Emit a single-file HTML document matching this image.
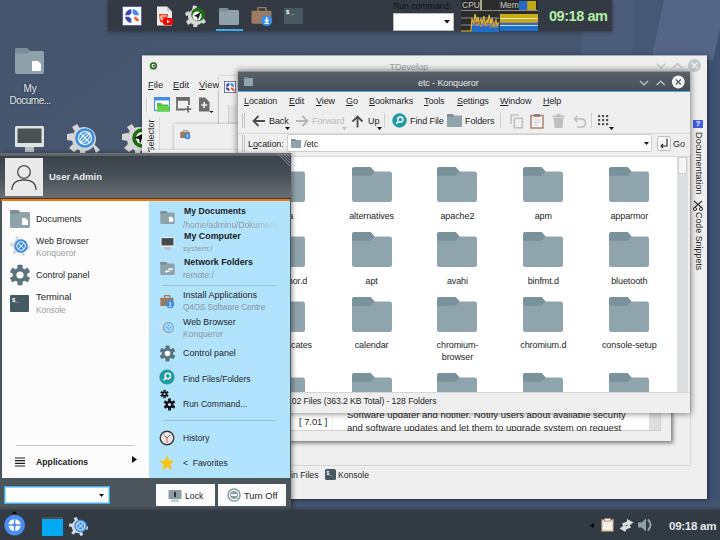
<!DOCTYPE html>
<html><head><meta charset="utf-8">
<style>
*{margin:0;padding:0;box-sizing:border-box}
html,body{width:720px;height:540px;overflow:hidden}
body{position:relative;font-family:"Liberation Sans",sans-serif;background:#44546f;color:#232627}
.a{position:absolute}
.t{position:absolute;white-space:nowrap;line-height:1}
</style></head><body>
<svg width="0" height="0" style="position:absolute">
  <defs>
    <symbol id="fold" viewBox="0 0 40 35">
      <path d="M2.5 0 L18.5 0 L22.5 4.5 L37.5 4.5 Q40 4.5 40 7 L40 32.5 Q40 35 37.5 35 L2.5 35 Q0 35 0 32.5 L0 2.5 Q0 0 2.5 0 Z" fill="#8fa4ad"/>
      <path d="M2.5 0 L18.5 0 L22.5 4.5 L18.5 8.7 L0 8.7 L0 2.5 Q0 0 2.5 0 Z" fill="#7a929c"/>
    </symbol>
  </defs>
</svg>

<!-- desktop background -->
<svg class="a" style="left:0;top:0" width="720" height="540" viewBox="0 0 720 540">
  <defs>
    <linearGradient id="bgG" x1="0" y1="0" x2="1" y2="1">
      <stop offset="0" stop-color="#45556e"/>
      <stop offset="0.35" stop-color="#47576f"/>
      <stop offset="1" stop-color="#435370"/>
    </linearGradient>
  </defs>
  <rect width="720" height="540" fill="url(#bgG)"/>
  <polygon points="585,0 636,0 632,60 580,60" fill="#4b5c7a"/>
  <polygon points="636,0 664,0 651,60 632,60" fill="#475877"/>
  <polygon points="664,0 720,0 720,30 713,60 651,60" fill="#546587"/>
  <polygon points="720,30 720,540 700,540 700,90 713,60" fill="#3f5071"/>
  <rect x="0" y="500" width="720" height="10" fill="#44546f"/>
</svg>
<!-- desktop icons -->
<div id="desk">
  <svg class="a" style="left:15px;top:48px" width="29" height="26" viewBox="0 0 29 26">
    <path d="M2 0 L12 0 L15 3 L27 3 Q29 3 29 5 L29 24 Q29 26 27 26 L2 26 Q0 26 0 24 L0 2 Q0 0 2 0 Z" fill="#8fa2aa"/>
    <path d="M2 0 L12 0 L15 3 L13 5.5 L0 5.5 L0 2 Q0 0 2 0 Z" fill="#7b8f99"/>
    <path d="M17 13 L23 13 L26 16 L26 23 L17 23 Z" fill="#fff"/>
  </svg>
  <div class="t" style="left:23.5px;top:83.5px;font-size:10px;color:#e2e7ec;text-shadow:0 0 2px rgba(0,0,0,0.5)">My</div>
  <div class="t" style="left:9.5px;top:95.5px;font-size:10px;letter-spacing:-0.5px;color:#e2e7ec;text-shadow:0 0 2px rgba(0,0,0,0.5)">Docume...</div>
  <svg class="a" style="left:15px;top:126px" width="29" height="26" viewBox="0 0 29 26">
    <rect x="0" y="0" width="29" height="21" rx="1.5" fill="#dfe3e5"/>
    <rect x="2.5" y="2.5" width="24" height="14.5" fill="#4b5153"/>
    <rect x="10" y="21" width="9" height="5" fill="#b9c0c3"/>
  </svg>
  <svg class="a" style="left:67px;top:124px" width="33" height="30" viewBox="0 0 33 30">
    <g fill="#d5d5d5">
      <path d="M5 3 L10 0 L14 6 L9 9 Z"/>
      <path d="M0 10 L6 9 L6 17 L0 16 Z"/>
      <path d="M2 24 L6 20 L11 25 L7 28 Z"/>
      <path d="M13 24 L19 24 L18 30 L13 30 Z"/>
      <path d="M26 22 L28 21 L33 26 L29 29 Z"/>
      <circle cx="17" cy="15" r="12"/>
    </g>
    <circle cx="18" cy="14" r="9.8" fill="#3b8fe6"/>
    <g stroke="#fff" stroke-width="1.2" fill="none">
      <circle cx="18" cy="14" r="6.5"/>
      <ellipse cx="18" cy="14" rx="3" ry="6.5" transform="rotate(45 18 14)"/>
      <path d="M13.4 9.4 L22.6 18.6 M13.4 18.6 L22.6 9.4"/>
    </g>
  </svg>
  <svg class="a" style="left:122px;top:124px" width="22" height="30" viewBox="0 0 22 30">
    <g fill="#d5d5d5">
      <path d="M5 3 L10 0 L14 6 L9 9 Z"/>
      <path d="M0 10 L6 9 L6 17 L0 16 Z"/>
      <path d="M2 24 L6 20 L11 25 L7 28 Z"/>
      <path d="M13 24 L19 24 L18 30 L13 30 Z"/>
      <circle cx="17" cy="15" r="12"/>
    </g>
    <circle cx="20" cy="14" r="9.8" fill="#1f6e13"/>
    <circle cx="20" cy="14" r="6" fill="#fff"/>
    <path d="M22 9 L12 14 L17 15 L18 20 Z" fill="#111"/>
  </svg>
</div>
</div>

<!-- top panel -->
<div class="a" style="left:108px;top:0;width:504px;height:31px;background:#333a44;box-shadow:0 1px 4px rgba(0,0,0,0.4)">
  <!-- q4os icon -->
  <svg class="a" style="left:14px;top:6px" width="20" height="20" viewBox="0 0 20 20">
    <rect x="0.5" y="0.5" width="19" height="19" fill="#fdfdfd" stroke="#5a5fa8" stroke-width="1"/>
    <path d="M10 10 L3 10 A7 7 0 0 1 10 3 Z" fill="#3a46ab"/>
    <path d="M10 10 L10 3 A7 7 0 0 1 17 10 Z" fill="#3d8bf3"/>
    <path d="M10 10 L10 17 A7 7 0 0 1 3 10 Z" fill="#3a46ab"/>
    <path d="M3 10 L17 10 M10 3 L10 17" stroke="#fdfdfd" stroke-width="1.3"/>
    <circle cx="10" cy="10" r="2.6" fill="#fdfdfd"/>
    <path d="M11.8 12.2 L13.6 10.4 L17.2 14 L15.4 15.8 Z" fill="#f4511e"/>
  </svg>
  <!-- html doc icon -->
  <svg class="a" style="left:48px;top:6px" width="20" height="21" viewBox="0 0 20 21">
    <path d="M1 0.5 L11 0.5 L16 5.5 L16 19.5 L1 19.5 Z" fill="#ececec"/>
    <path d="M11 0.5 L11 5.5 L16 5.5 Z" fill="#d0d0d0"/>
    <path d="M3 8 L12 8 L11 16 L7.5 17 L4 16 Z" fill="#e44d26"/>
    <path d="M5 10 L10 10 M5 10 L5 13 L9 13 L9 15" stroke="#fff" stroke-width="1" fill="none"/>
    <rect x="7" y="12" width="10" height="7" rx="2" fill="#f00"/>
    <path d="M11 13.8 L14 15.5 L11 17.2 Z" fill="#fff"/>
  </svg>
  <!-- gear green -->
  <svg class="a" style="left:77px;top:5px" width="23" height="23" viewBox="0 0 23 23">
    <g fill="#d9d9d9">
      <circle cx="11" cy="12" r="8"/>
      <path d="M8 0.5 L12 1 L11 5 L7 5 Z"/>
      <path d="M0 8 L4 6 L5 10 L1 11 Z"/>
      <path d="M1 16 L5 14 L6 18 L3 20 Z"/>
      <path d="M8 22 L9 18 L13 18 L12 22 Z"/>
      <path d="M18 19 L16 16 L19 14 L21 17 Z"/>
    </g>
    <circle cx="13" cy="9.5" r="6.8" fill="#1e6e12"/>
    <circle cx="12" cy="11" r="4.5" fill="#fff"/>
    <path d="M16 7 L8.8 11 L12 11.8 L12.8 15 Z" fill="#111"/>
  </svg>
  <!-- folder -->
  <svg class="a" style="left:111px;top:8px" width="20" height="17" viewBox="0 0 20 17">
    <path d="M1.5 0 L8 0 L10 2 L18.5 2 Q20 2 20 3.5 L20 15.5 Q20 17 18.5 17 L1.5 17 Q0 17 0 15.5 L0 1.5 Q0 0 1.5 0 Z" fill="#8fa1aa"/>
    <path d="M1.5 0 L8 0 L10 2 L8.5 3.5 L0 3.5 L0 1.5 Q0 0 1.5 0 Z" fill="#7a8e98"/>
  </svg>
  <div class="a" style="left:108px;top:29px;width:27px;height:2px;background:#3daee9"></div>
  <!-- briefcase -->
  <svg class="a" style="left:143px;top:7px" width="23" height="21" viewBox="0 0 23 21">
    <path d="M7 4 L7 1.5 Q7 0.5 8 0.5 L14 0.5 Q15 0.5 15 1.5 L15 4" stroke="#9c7b61" stroke-width="1.5" fill="none"/>
    <rect x="0.5" y="3.8" width="20" height="13" rx="1" fill="#9c7b61"/>
    <circle cx="15.7" cy="13.5" r="5.5" fill="#3b8ee8"/>
    <path d="M15.7 10 L15.7 14.5 M13.8 12.8 L15.7 14.8 L17.6 12.8 M13.5 16.3 L18 16.3" stroke="#fff" stroke-width="1.3" fill="none"/>
  </svg>
  <!-- terminal -->
  <div class="a" style="left:176px;top:8px;width:19px;height:16px;background:#485961;border-radius:1px"></div>
  <div class="t" style="left:178px;top:9px;font-size:6px;font-weight:bold;color:#fff">$ _</div>
  <!-- run command -->
  <div class="t" style="left:285px;top:1.8px;font-size:8.6px;color:#0e1114">Run command:</div>
  <div class="a" style="left:285px;top:13px;width:61px;height:18px;background:#fff;border:1px solid #bbb"></div>
  <svg class="a" style="left:336px;top:20px" width="6" height="4" viewBox="0 0 6 4"><path d="M0 0 L6 0 L3 3.5 Z" fill="#111"/></svg>
  <!-- cpu/mem -->
  <div class="a" style="left:353px;top:0;width:38px;height:31px;background:#2b2b2b"></div>
  <div class="a" style="left:392px;top:0;width:38px;height:31px;background:#2b2b2b"></div>
  <div class="t" style="left:354px;top:1px;font-size:8.5px;color:#c8c8c8">CPU</div>
  <div class="t" style="left:392px;top:1px;font-size:8.5px;color:#c8c8c8">Mem</div>
  <div class="a" style="left:372px;top:0;width:1px;height:10px;background:#6ab0f0"></div>
  <div class="a" style="left:373px;top:0;width:1px;height:10px;background:#e0a020"></div>
  <div class="a" style="left:411px;top:1px;width:8px;height:9px;background:#1e6bc8"></div>
  <div class="a" style="left:419px;top:1px;width:1px;height:9px;background:#d08020"></div>
  <div class="a" style="left:420px;top:1px;width:8px;height:9px;background:#c0a818"></div>
  <div class="a" style="left:353px;top:10px;width:77px;height:1px;background:#8a8a8a"></div>
  <svg class="a" style="left:353px;top:11px" width="39" height="21" viewBox="0 0 39 21">
    <path d="M11 21 L11 8 L13 12 L14 3 L16 11 L17 6 L18 12 L20 8 L21 13 L23 5 L24 14 L26 9 L27 12 L28 4 L30 13 L31 7 L33 15 L35 9 L36 14 L38 11 L38 21 Z" fill="#1f6fc8"/>
    <path d="M0 20 L10 20 L11 8 L13 12 L14 3 L16 11 L17 6 L18 12 L20 8 L21 13 L23 5 L24 14 L26 9 L27 12 L28 4 L30 13 L31 7 L33 15 L35 9 L36 14 L38 11" stroke="#e8b820" stroke-width="1.2" fill="none"/>
    <path d="M12 14 L14 9 L16 15 L18 10 L20 16 L23 11 L25 16 L28 10 L30 17 L33 12 L35 17 L38 14" stroke="#e07818" stroke-width="1" fill="none"/>
    <path d="M0 7 L38 7 M0 14 L38 14" stroke="#a8a8a8" stroke-width="0.8"/>
  </svg>
  <div class="a" style="left:392px;top:14px;width:38px;height:8px;background:#c8ac18"></div>
  <div class="a" style="left:392px;top:22px;width:38px;height:1px;background:#d08020"></div>
  <div class="a" style="left:392px;top:23px;width:38px;height:8px;background:#1f6fc8"></div>
  <div class="a" style="left:392px;top:18px;width:38px;height:1px;background:#e8e8c8"></div>
  <div class="a" style="left:392px;top:25px;width:38px;height:1px;background:#c8d8f0"></div>
  <!-- clock -->
  <div class="t" style="left:441px;top:8.5px;font-size:14.5px;letter-spacing:-0.45px;font-weight:bold;color:#b6eea6">09:18 am</div>
</div>

<!-- TDevelop window -->
<div class="a" style="left:142px;top:55px;width:565px;height:444px;background:#efefef;box-shadow:1px 1px 4px rgba(0,0,0,0.5)">
  <div class="a" style="left:0;top:0;width:565px;height:1px;background:#a8b0bc"></div>
  <svg class="a" style="left:6px;top:6px" width="11" height="10" viewBox="0 0 11 10">
    <circle cx="5" cy="5" r="4.5" fill="#ddd"/>
    <circle cx="5.5" cy="4.8" r="3.6" fill="#1f6e13"/>
    <circle cx="5.5" cy="4.8" r="2" fill="#fff"/>
    <path d="M7 3.5 L4 5 L5.5 5.3 L6 6.8 Z" fill="#111"/>
  </svg>
  <div class="t" style="left:247.5px;top:8px;font-size:9px;color:#a0a4a8">TDevelop</div>
  <svg class="a" style="left:513px;top:4px" width="46" height="14" viewBox="0 0 46 14">
    <path d="M1.5 4.5 L6 9 L10.5 4.5" stroke="#c3c8cb" stroke-width="1.3" fill="none"/>
    <path d="M18 9 L22.5 4.5 L27 9" stroke="#c3c8cb" stroke-width="1.3" fill="none"/>
  </svg>
  <svg class="a" style="left:545px;top:3px" width="15" height="15" viewBox="0 0 15 15">
    <circle cx="7.5" cy="7.5" r="6.5" fill="#c3c8cb"/>
    <path d="M4.5 4.5 L10.5 10.5 M10.5 4.5 L4.5 10.5" stroke="#efefef" stroke-width="1.3"/>
  </svg>
  <div class="t" style="left:6px;top:25px;font-size:9.4px;color:#232627"><u>F</u>ile</div>
  <div class="t" style="left:31px;top:25px;font-size:9.4px;color:#232627"><u>E</u>dit</div>
  <div class="t" style="left:57px;top:25px;font-size:9.4px;color:#232627"><u>V</u>iew</div>
  <div class="a" style="left:4px;top:42px;width:2px;height:15px;border-left:1px solid #c8c8c8;border-right:1px solid #fff"></div>
  <svg class="a" style="left:12px;top:42px" width="17" height="16" viewBox="0 0 17 16">
    <rect x="0.5" y="0.5" width="15" height="13" fill="#fff" stroke="#3d8ee9"/>
    <rect x="0.5" y="0.5" width="15" height="3" fill="#3d8ee9"/>
    <path d="M3 6 L7 6 L8 7.5 L14 7.5 L16 14.5 L3 14.5 Z" fill="#4dbd3a"/>
    <path d="M3 9 L16 9 L15 14.5 L3 14.5 Z" fill="#63d050"/>
  </svg>
  <svg class="a" style="left:34px;top:42px" width="16" height="16" viewBox="0 0 16 16">
    <path d="M9 12.5 L1 12.5 L1 1 L13 1 L13 8" stroke="#6c6c6c" stroke-width="1.8" fill="none"/>
    <rect x="1" y="1" width="12" height="2.8" fill="#6c6c6c"/>
    <path d="M12 9 L12 15.5 M8.8 12.2 L15.2 12.2" stroke="#6c6c6c" stroke-width="1.8"/>
  </svg>
  <svg class="a" style="left:56px;top:42px" width="17" height="16" viewBox="0 0 17 16">
    <path d="M1 0.5 L7 0.5 L11.5 5 L11.5 14.5 L1 14.5 Z" fill="#6c6c6c"/>
    <path d="M6.2 5 L6.2 11 M3.2 8 L9.2 8" stroke="#eee" stroke-width="1.6"/>
    <path d="M11.5 14 L15.5 14 L13.5 16 Z" fill="#111"/>
  </svg>
  <div class="a" style="left:76px;top:36px;width:1px;height:32px;background:#d5d5d5"></div>
  <!-- left selector strip -->
  <div class="t" style="left:-9.5px;top:76px;width:38px;height:10px;font-size:9px;color:#232627;transform:rotate(-90deg);text-align:center">Selector</div>
  <div class="a" style="left:17px;top:62px;width:1px;height:380px;background:#d8d8d8"></div>
  <!-- inner windows -->
  <div class="a" style="left:77px;top:21px;width:30px;height:350px;background:#efefef;box-shadow:0 0 2px rgba(0,0,0,0.25)">
    <svg class="a" style="left:5px;top:5px" width="12" height="12" viewBox="0 0 20 20">
      <rect x="0.5" y="0.5" width="19" height="19" fill="#fdfdfd" stroke="#4a4f9a" stroke-width="1.5"/>
      <path d="M9 3 A7 7 0 0 0 3 9 L7 9 A3 3 0 0 1 9 7 Z" fill="#3b48ad"/>
      <path d="M11 3 A7 7 0 0 1 17 9 L13 9 A3 3 0 0 0 11 7 Z" fill="#3f8ef5"/>
      <path d="M3 11 A7 7 0 0 0 9 17 L9 13 A3 3 0 0 1 7 11 Z" fill="#3b48ad"/>
      <path d="M11.5 12.5 L13 11 L17.5 15 L16 16.5 Z" fill="#f4511e" stroke="#f4511e" stroke-width="1.5"/>
    </svg>
    <div class="a" style="left:9px;top:29px;width:9px;height:300px;background:#e2e3e4;border-left:1px solid #d0d0d0"></div>
  </div>
  <div class="a" style="left:32px;top:69px;width:70px;height:350px;background:#efefef;box-shadow:0 0 3px rgba(0,0,0,0.3)">
    <svg class="a" style="left:6px;top:6px" width="11" height="10" viewBox="0 0 23 21">
      <path d="M7 4 L7 1.5 Q7 0.5 8 0.5 L14 0.5 Q15 0.5 15 1.5 L15 4" stroke="#9c7b61" stroke-width="2" fill="none"/>
      <rect x="0.5" y="3.8" width="20" height="13" rx="1" fill="#9c7b61"/>
      <circle cx="15.7" cy="13.5" r="6" fill="#3b8ee8"/>
      <path d="M15.7 10 L15.7 15" stroke="#fff" stroke-width="2"/>
    </svg>
  </div>
  <!-- bottom bar -->
  <div class="a" style="left:-20px;top:100px;width:569px;height:311px;border-right:1px solid #d6d6d6;border-bottom:1px solid #d6d6d6;border-radius:0 0 2px 0"></div>
  <div class="t" style="left:149px;top:416px;font-size:8.7px;color:#232627">in Files</div>
  <div class="a" style="left:183px;top:414px;width:11px;height:11px;background:#475961;border-radius:1.5px"></div>
  <div class="t" style="left:184.5px;top:416px;font-size:5px;font-weight:bold;color:#fff">$_</div>
  <div class="t" style="left:196px;top:416px;font-size:8.6px;color:#232627">Konsole</div>
  <!-- right strip -->
  <div class="a" style="left:551px;top:65px;width:10px;height:8px;background:#3d5fe0"></div>
  <div class="t" style="left:553.5px;top:65px;font-size:8px;font-weight:bold;color:#fff">?</div>
  <div class="t" style="top:77px;font-size:9.3px;color:#232627;transform:rotate(90deg);transform-origin:0 0;left:561px">Documentation</div>
  <svg class="a" style="left:551px;top:145px" width="11" height="11" viewBox="0 0 11 11">
    <path d="M1 1 L9 8 M9 1 L1 8" stroke="#333" stroke-width="1.2"/>
    <circle cx="2" cy="9" r="1.6" fill="none" stroke="#333"/>
    <circle cx="8" cy="9" r="1.6" fill="none" stroke="#333"/>
  </svg>
  <div class="t" style="font-size:8.9px;color:#232627;transform:rotate(90deg);transform-origin:0 0;left:561px;top:156.5px">Code Snippets</div>
</div>

<!-- updater window -->
<div class="a" style="left:150px;top:150px;width:521px;height:291px;background:#efefef;box-shadow:2px 2px 4px rgba(0,0,0,0.5)">
  <div class="a" style="left:0;top:0;width:511px;height:281px;background:#fff;border-right:1px solid #d0d0d0;border-bottom:1px solid #d0d0d0"></div>
  <div class="a" style="left:499px;top:0;width:11px;height:280px;background:#dcdedf"></div>
  <div class="a" style="left:182px;top:0;width:1px;height:280px;background:#f0f0f0"></div>
  <div class="t" style="left:149px;top:268px;font-size:9.3px;color:#232627">[ 7.01 ]</div>
  <div class="t" style="left:197px;top:260px;font-size:9.5px;color:#232627">Software updater and notifier. Notify users about available security</div>
  <div class="t" style="left:197px;top:272.5px;font-size:9.5px;color:#232627">and software updates and let them to upgrade system on request</div>
  <div class="a" style="left:0;top:281px;width:511px;height:10px;background:#efefef"></div>
</div>

<!-- Konqueror window -->
<div class="a" style="left:238px;top:71px;width:452px;height:342px;background:#efefef;box-shadow:0 0 6px 1px rgba(0,0,0,0.45);font-size:9px;letter-spacing:-0.1px">
  <div class="a" style="left:0;top:0;width:452px;height:1px;background:#8c9398"></div><div class="a" style="left:0;top:1px;width:452px;height:19px;background:linear-gradient(#58616a,#464e56)"></div>
  <div class="a" style="left:0;top:20px;width:452px;height:1px;background:#3daee9"></div>
  <svg class="a" style="left:5px;top:5px" width="11" height="11" viewBox="0 0 11 11">
    <path d="M1 1 L4.5 1 L5.5 2 L10 2 L10 10 L1 10 Z" fill="#8ea5b0"/>
    <path d="M1 1 L4.5 1 L5.5 2 L4.5 3 L1 3 Z" fill="#6f8894"/>
  </svg>
  <div class="t" style="left:180px;top:8px;font-size:9px;color:#e6e9ec">etc - Konqueror</div>
  <svg class="a" style="left:398px;top:4px" width="34" height="13" viewBox="0 0 34 13">
    <path d="M4 6 L8 10 L12 6" stroke="#c9cdd0" stroke-width="1.2" fill="none"/>
    <path d="M20.7 10 L24.7 6 L28.7 10" stroke="#c9cdd0" stroke-width="1.2" fill="none"/>
  </svg>
  <svg class="a" style="left:432.5px;top:3.5px" width="15" height="15" viewBox="0 0 15 15">
    <circle cx="7.3" cy="7" r="6.4" fill="#f3f4f5"/>
    <path d="M4.8 4.5 L9.8 9.5 M9.8 4.5 L4.8 9.5" stroke="#4a5158" stroke-width="1.1"/>
  </svg>
  <!-- menu -->
  <div class="t" style="left:6px;top:26px;color:#232627"><u>L</u>ocation</div>
  <div class="t" style="left:51px;top:26px;color:#232627"><u>E</u>dit</div>
  <div class="t" style="left:78px;top:26px;color:#232627"><u>V</u>iew</div>
  <div class="t" style="left:108px;top:26px;color:#232627"><u>G</u>o</div>
  <div class="t" style="left:131px;top:26px;color:#232627"><u>B</u>ookmarks</div>
  <div class="t" style="left:186px;top:26px;color:#232627"><u>T</u>ools</div>
  <div class="t" style="left:219px;top:26px;color:#232627"><u>S</u>ettings</div>
  <div class="t" style="left:262px;top:26px;color:#232627"><u>W</u>indow</div>
  <div class="t" style="left:305px;top:26px;color:#232627"><u>H</u>elp</div>
  <!-- toolbar -->
  <div class="a" style="left:4px;top:42px;width:3px;height:15px;border-left:1px solid #c4c4c4;border-right:1px solid #c4c4c4"></div>
  <svg class="a" style="left:14px;top:44px" width="14" height="12" viewBox="0 0 14 12">
    <path d="M13 6 L1.5 6 M6.5 1 L1.5 6 L6.5 11" stroke="#4d4d4d" stroke-width="1.8" fill="none"/>
  </svg>
  <div class="t" style="left:31px;top:46px;color:#232627">Back</div>
  <svg class="a" style="left:47px;top:56px" width="6" height="4"><path d="M0 0 L5 0 L2.5 3 Z" fill="#111"/></svg>
  <svg class="a" style="left:57px;top:44px" width="14" height="12" viewBox="0 0 14 12">
    <path d="M1 6 L12.5 6 M7.5 1 L12.5 6 L7.5 11" stroke="#b4b4b4" stroke-width="1.8" fill="none"/>
  </svg>
  <div class="t" style="left:74px;top:46px;color:#bcbcbc">Forward</div>
  <svg class="a" style="left:104px;top:56px" width="6" height="4"><path d="M0 0 L5 0 L2.5 3 Z" fill="#bbb"/></svg>
  <svg class="a" style="left:113px;top:44px" width="13" height="13" viewBox="0 0 13 13">
    <path d="M6.5 12.5 L6.5 1.5 M1.5 6.5 L6.5 1.5 L11.5 6.5" stroke="#4d4d4d" stroke-width="1.8" fill="none"/>
  </svg>
  <div class="t" style="left:130px;top:46px;color:#232627">Up</div>
  <svg class="a" style="left:139px;top:56px" width="6" height="4"><path d="M0 0 L5 0 L2.5 3 Z" fill="#111"/></svg>
  <div class="a" style="left:146px;top:42px;width:1px;height:15px;background:#cfcfcf"></div>
  <svg class="a" style="left:154px;top:42px" width="15" height="15" viewBox="0 0 15 15">
    <circle cx="7.5" cy="7.5" r="7.2" fill="#1e9aa5"/>
    <circle cx="8.3" cy="6.6" r="2.6" fill="none" stroke="#fff" stroke-width="1.4"/>
    <path d="M6.4 8.5 L4.2 10.7" stroke="#fff" stroke-width="1.6"/>
  </svg>
  <div class="t" style="left:172px;top:46px;color:#232627">Find File</div>
  <svg class="a" style="left:209px;top:43px" width="15" height="14" viewBox="0 0 15 14">
    <path d="M0 0 L5.5 0 L7 1.5 L15 1.5 L15 13 L0 13 Z" fill="#8fa3ac"/>
    <path d="M0 0 L5.5 0 L7 1.5 L6 2.8 L0 2.8 Z" fill="#7a8f99"/>
  </svg>
  <div class="t" style="left:227px;top:46px;color:#232627">Folders</div>
  <div class="a" style="left:262px;top:42px;width:1px;height:15px;background:#cfcfcf"></div>
  <svg class="a" style="left:272px;top:43px" width="14" height="15" viewBox="0 0 14 15">
    <path d="M9 1 L1 1 L1 10" stroke="#c2c2c2" stroke-width="1.6" fill="none"/>
    <rect x="4.3" y="4.3" width="8" height="9.5" fill="none" stroke="#c2c2c2" stroke-width="1.6"/>
  </svg>
  <svg class="a" style="left:292px;top:42px" width="14" height="16" viewBox="0 0 14 16">
    <rect x="1" y="2.5" width="12" height="12.5" fill="#f6f6f6" stroke="#a57d6a" stroke-width="1.4"/>
    <rect x="4" y="1" width="6" height="3" fill="#a57d6a"/>
    <path d="M3.5 7 L10.5 7 M3.5 9.5 L10.5 9.5 M3.5 12 L8 12" stroke="#ccc" stroke-width="1"/>
  </svg>
  <svg class="a" style="left:314px;top:43px" width="13" height="15" viewBox="0 0 13 15">
    <rect x="0.5" y="1.5" width="12" height="2" fill="#c0c0c0"/>
    <rect x="4.5" y="0" width="4" height="2" fill="#c0c0c0"/>
    <path d="M1.5 4 L11.5 4 L10.5 14 L2.5 14 Z" fill="#c0c0c0"/>
  </svg>
  <svg class="a" style="left:335px;top:44px" width="14" height="13" viewBox="0 0 14 13">
    <path d="M4.5 1 L1.5 4 L4.5 7 M1.5 4 L8.5 4 Q12.5 4 12.5 8 Q12.5 12 8.5 12 L4 12" stroke="#bdbdbd" stroke-width="1.6" fill="none"/>
  </svg>
  <div class="a" style="left:353px;top:42px;width:1px;height:15px;background:#cfcfcf"></div>
  <svg class="a" style="left:360px;top:44px" width="17" height="16" viewBox="0 0 17 16">
    <g fill="#555"><rect x="0" y="0" width="2.2" height="2.2"/><rect x="4" y="0" width="2.2" height="2.2"/><rect x="8" y="0" width="2.2" height="2.2"/>
    <rect x="0" y="4" width="2.2" height="2.2"/><rect x="4" y="4" width="2.2" height="2.2"/><rect x="8" y="4" width="2.2" height="2.2"/>
    <rect x="0" y="8" width="2.2" height="2.2"/><rect x="4" y="8" width="2.2" height="2.2"/><rect x="8" y="8" width="2.2" height="2.2"/></g>
    <path d="M11 12 L16 12 L13.5 15 Z" fill="#111"/>
  </svg>
  <div class="a" style="left:0;top:62px;width:452px;height:1px;background:#dadada"></div>
  <!-- location row -->
  <div class="a" style="left:4px;top:64px;width:3px;height:17px;border-left:1px solid #c4c4c4;border-right:1px solid #c4c4c4"></div>
  <div class="t" style="left:10px;top:69px;color:#232627">L<u>o</u>cation:</div>
  <div class="a" style="left:49px;top:63px;width:365px;height:18px;background:#fff;border:1px solid #cfcfcf;border-radius:2px"></div>
  <svg class="a" style="left:53px;top:68px" width="10" height="9" viewBox="0 0 10 9">
    <path d="M0 0 L4 0 L5 1 L10 1 L10 9 L0 9 Z" fill="#8fa3ac"/>
    <path d="M0 0 L4 0 L5 1 L4.2 2 L0 2 Z" fill="#7a8f99"/>
  </svg>
  <div class="t" style="left:66px;top:69px;color:#232627">/etc</div>
  <svg class="a" style="left:406px;top:71px" width="6" height="4"><path d="M0 0 L5 0 L2.5 3 Z" fill="#111"/></svg>
  <svg class="a" style="left:419px;top:65px" width="14" height="15" viewBox="0 0 14 15">
    <rect x="0.5" y="0.5" width="13" height="14" rx="2" fill="#f6f6f6" stroke="#bdbdbd"/>
    <path d="M10 2.5 L10 10 L4 10 M6 8 L4 10 L6 12" stroke="#222" stroke-width="1.1" fill="none"/>
  </svg>
  <div class="t" style="left:435px;top:69px;color:#232627">Go</div>
  <!-- file view -->
  <div class="a" style="left:0;top:85px;width:452px;height:1px;background:#d6d6d6"></div>
  <div class="a" style="left:0;top:86px;width:450px;height:235px;background:#fff"></div>
  <div class="a" style="left:439px;top:86px;width:11px;height:235px;background:#dcdedf"></div>
  <div class="a" style="left:440px;top:86px;width:9px;height:17px;background:#f5f5f5;border:1px solid #cfcfcf"></div>
  <div class="a" style="left:0;top:86px;width:439px;height:235px;overflow:hidden"><div class="a" style="left:0;top:-86px;width:439px;height:400px"><svg class="a" style="left:27px;top:96.2px" width="40" height="35"><use href="#fold"/></svg>
<div class="t" style="left:-13px;top:139px;width:120px;text-align:center;color:#232627;line-height:12px">alsa</div>
<svg class="a" style="left:113.6px;top:96.2px" width="40" height="35"><use href="#fold"/></svg>
<div class="t" style="left:73.6px;top:139px;width:120px;text-align:center;color:#232627;line-height:12px">alternatives</div>
<svg class="a" style="left:199.4px;top:96.2px" width="40" height="35"><use href="#fold"/></svg>
<div class="t" style="left:159.4px;top:139px;width:120px;text-align:center;color:#232627;line-height:12px">apache2</div>
<svg class="a" style="left:285.3px;top:96.2px" width="40" height="35"><use href="#fold"/></svg>
<div class="t" style="left:245.3px;top:139px;width:120px;text-align:center;color:#232627;line-height:12px">apm</div>
<svg class="a" style="left:371.3px;top:96.2px" width="40" height="35"><use href="#fold"/></svg>
<div class="t" style="left:331.3px;top:139px;width:120px;text-align:center;color:#232627;line-height:12px">apparmor</div>
<svg class="a" style="left:27px;top:161.3px" width="40" height="35"><use href="#fold"/></svg>
<div class="t" style="left:-13px;top:203.5px;width:120px;text-align:center;color:#232627;line-height:12px">apparmor.d</div>
<svg class="a" style="left:113.6px;top:161.3px" width="40" height="35"><use href="#fold"/></svg>
<div class="t" style="left:73.6px;top:203.5px;width:120px;text-align:center;color:#232627;line-height:12px">apt</div>
<svg class="a" style="left:199.4px;top:161.3px" width="40" height="35"><use href="#fold"/></svg>
<div class="t" style="left:159.4px;top:203.5px;width:120px;text-align:center;color:#232627;line-height:12px">avahi</div>
<svg class="a" style="left:285.3px;top:161.3px" width="40" height="35"><use href="#fold"/></svg>
<div class="t" style="left:245.3px;top:203.5px;width:120px;text-align:center;color:#232627;line-height:12px">binfmt.d</div>
<svg class="a" style="left:371.3px;top:161.3px" width="40" height="35"><use href="#fold"/></svg>
<div class="t" style="left:331.3px;top:203.5px;width:120px;text-align:center;color:#232627;line-height:12px">bluetooth</div>
<svg class="a" style="left:27px;top:225.7px" width="40" height="35"><use href="#fold"/></svg>
<div class="t" style="left:-13px;top:268px;width:120px;text-align:center;color:#232627;line-height:12px">ca-certificates</div>
<svg class="a" style="left:113.6px;top:225.7px" width="40" height="35"><use href="#fold"/></svg>
<div class="t" style="left:73.6px;top:268px;width:120px;text-align:center;color:#232627;line-height:12px">calendar</div>
<svg class="a" style="left:199.4px;top:225.7px" width="40" height="35"><use href="#fold"/></svg>
<div class="t" style="left:159.4px;top:268px;width:120px;text-align:center;color:#232627;line-height:12px">chromium-<br>browser</div>
<svg class="a" style="left:285.3px;top:225.7px" width="40" height="35"><use href="#fold"/></svg>
<div class="t" style="left:245.3px;top:268px;width:120px;text-align:center;color:#232627;line-height:12px">chromium.d</div>
<svg class="a" style="left:371.3px;top:225.7px" width="40" height="35"><use href="#fold"/></svg>
<div class="t" style="left:331.3px;top:268px;width:120px;text-align:center;color:#232627;line-height:12px">console-setup</div>
<svg class="a" style="left:27px;top:302.3px" width="40" height="35"><use href="#fold"/></svg>
<svg class="a" style="left:113.6px;top:302.3px" width="40" height="35"><use href="#fold"/></svg>
<svg class="a" style="left:199.4px;top:302.3px" width="40" height="35"><use href="#fold"/></svg>
<svg class="a" style="left:285.3px;top:302.3px" width="40" height="35"><use href="#fold"/></svg>
<svg class="a" style="left:371.3px;top:302.3px" width="40" height="35"><use href="#fold"/></svg></div></div>
  <!-- status bar -->
  <div class="a" style="left:0;top:321px;width:452px;height:1px;background:#d6d6d6"></div>
  <div class="t" style="left:49px;top:326px;font-size:8.7px;color:#232627">102 Files (363.2 KB Total) - 128 Folders</div>
</div>

<!-- start menu -->
<div class="a" style="left:0;top:153px;width:291px;height:357px;background:#4a555c;box-shadow:2px 0 4px rgba(0,0,0,0.35);font-size:9px">
  <div class="a" style="left:0;top:0;width:291px;height:3px;background:linear-gradient(#6c7175,#5a5f64)"></div>
  <div class="a" style="left:0;top:3px;width:291px;height:43px;background:linear-gradient(#3a424a 0%,#4a5258 50%,#6b7075 100%)"></div>
  <svg class="a" style="left:276px;top:1px" width="14" height="14" viewBox="0 0 14 14">
    <path d="M2 0 L14 12 M5 0 L14 9 M8 0 L14 6 M11 0 L14 3" stroke="#8a9095" stroke-width="1"/>
  </svg>
  <div class="a" style="left:5px;top:5px;width:38px;height:38px;background:#e9e9e9"></div>
  <svg class="a" style="left:9px;top:11px" width="30" height="28" viewBox="0 0 30 28">
    <circle cx="15" cy="8" r="6.3" fill="none" stroke="#4d4d4d" stroke-width="1.3"/>
    <path d="M3 26 Q3 16 15 16 Q27 16 27 26" fill="none" stroke="#4d4d4d" stroke-width="1.3"/>
  </svg>
  <div class="t" style="left:49px;top:18.5px;font-size:9.5px;font-weight:bold;color:#e9ecee">User Admin</div>
  <div class="a" style="left:0;top:45px;width:291px;height:1px;background:#3a3e42"></div>
  <div class="a" style="left:1px;top:46px;width:289px;height:2px;background:#f67400"></div>
  <!-- left white -->
  <div class="a" style="left:2px;top:48px;width:147px;height:277px;background:#fcfcfc">
    <svg class="a" style="left:8px;top:9px" width="20" height="18" viewBox="0 0 20 18">
      <path d="M1.5 0 L8 0 L10 2 L18.5 2 Q20 2 20 3.5 L20 16.5 Q20 18 18.5 18 L1.5 18 Q0 18 0 16.5 L0 1.5 Q0 0 1.5 0 Z" fill="#8fa3ac"/>
      <path d="M1.5 0 L8 0 L10 2 L8.5 3.8 L0 3.8 L0 1.5 Q0 0 1.5 0 Z" fill="#7a8f99"/>
      <path d="M12 8 L15.5 8 L18 10.5 L18 15 L12 15 Z" fill="#fff"/>
    </svg>
    <div class="t" style="left:34px;top:13.5px;font-size:9px;color:#232627">Documents</div>
    <svg class="a" style="left:8px;top:189px" width="20" height="20" viewBox="0 0 20 20" style="display:none"></svg>
    <svg class="a" style="left:8px;top:35px" width="20" height="20" viewBox="0 0 18 18">
      <g fill="#d9d9d9"><circle cx="9" cy="9" r="6.5"/><rect x="7.5" y="0" width="3" height="4" transform="rotate(-20 9 9)"/><rect x="7.5" y="0" width="3" height="4" transform="rotate(-80 9 9)"/><rect x="7.5" y="0" width="3" height="4" transform="rotate(220 9 9)"/><rect x="7.5" y="0" width="3" height="4" transform="rotate(160 9 9)"/><rect x="7.5" y="0" width="3" height="4" transform="rotate(100 9 9)"/></g>
      <circle cx="10" cy="9" r="6" fill="#3a8ee8"/>
      <g stroke="#fff" stroke-width="0.9" fill="none"><circle cx="10" cy="9" r="3.8"/><path d="M7.3 6.3 L12.7 11.7 M7.3 11.7 L12.7 6.3"/></g>
    </svg>
    <div class="t" style="left:34px;top:36px;font-size:8.8px;color:#232627">Web Browser</div>
    <div class="t" style="left:34px;top:48px;font-size:8.6px;color:#9b9d9e">Konqueror</div>
    <svg class="a" style="left:7px;top:63px" width="22" height="22" viewBox="0 0 22 22">
      <g fill="#5b7381" transform="translate(11 11)">
        <circle r="7.3"/>
        <rect x="-2.6" y="-10.3" width="5.2" height="4" rx="0.8"/>
        <rect x="-2.6" y="-10.3" width="5.2" height="4" rx="0.8" transform="rotate(60)"/>
        <rect x="-2.6" y="-10.3" width="5.2" height="4" rx="0.8" transform="rotate(120)"/>
        <rect x="-2.6" y="-10.3" width="5.2" height="4" rx="0.8" transform="rotate(180)"/>
        <rect x="-2.6" y="-10.3" width="5.2" height="4" rx="0.8" transform="rotate(240)"/>
        <rect x="-2.6" y="-10.3" width="5.2" height="4" rx="0.8" transform="rotate(300)"/>
      </g>
      <circle cx="11" cy="11" r="3.6" fill="#fcfcfc"/>
    </svg>
    <div class="t" style="left:34px;top:70px;font-size:9px;color:#232627">Control panel</div>
    <div class="a" style="left:8px;top:94px;width:19px;height:17px;background:#465a63;border-radius:1px"></div>
    <div class="t" style="left:10px;top:96px;font-size:6px;font-weight:bold;color:#fff">$_</div>
    <div class="t" style="left:34px;top:91px;font-size:9.4px;color:#232627">Terminal</div>
    <div class="t" style="left:34px;top:105.5px;font-size:8.2px;color:#9b9d9e">Konsole</div>
    <div class="a" style="left:14px;top:244px;width:119px;height:1px;background:#c5c7c9"></div>
    <svg class="a" style="left:13px;top:256px" width="10" height="10" viewBox="0 0 10 10">
      <path d="M0 1 L10 1 M0 3.7 L10 3.7 M0 6.3 L10 6.3 M0 9 L10 9" stroke="#1a1a1a" stroke-width="1.2"/>
    </svg>
    <div class="t" style="left:34px;top:257px;font-size:8.7px;font-weight:bold;color:#1d1f21">Applications</div>
    <svg class="a" style="left:130px;top:255px" width="5" height="7" viewBox="0 0 5 7"><path d="M0 0 L5 3.5 L0 7 Z" fill="#111"/></svg>
  </div>
  <!-- right blue -->
  <div class="a" style="left:149px;top:48px;width:141px;height:277px;background:#b1e3fc">
    <svg class="a" style="left:11px;top:10px" width="15" height="13" viewBox="0 0 20 18">
      <path d="M1.5 0 L8 0 L10 2 L18.5 2 Q20 2 20 3.5 L20 16.5 Q20 18 18.5 18 L1.5 18 Q0 18 0 16.5 L0 1.5 Q0 0 1.5 0 Z" fill="#8fa3ac"/>
      <path d="M1.5 0 L8 0 L10 2 L8.5 3.8 L0 3.8 L0 1.5 Q0 0 1.5 0 Z" fill="#7a8f99"/>
      <path d="M12 8 L15.5 8 L18 10.5 L18 15 L12 15 Z" fill="#fff"/>
    </svg>
    <div class="t" style="left:35px;top:6px;font-size:8.7px;font-weight:bold;color:#1a1c1e">My Documents</div>
    <div class="t" style="left:34px;top:19.5px;font-size:8.4px;color:#8c9aa1;width:97px;overflow:hidden;-webkit-mask-image:linear-gradient(90deg,#000 70%,transparent)">/home/adminu/Dokumente</div>
    <svg class="a" style="left:11px;top:36px" width="15" height="14" viewBox="0 0 15 14">
      <rect x="0.5" y="0" width="14" height="10" fill="#e6e8e9"/>
      <rect x="1.6" y="1.1" width="11.8" height="7.3" fill="#444a4d"/>
      <rect x="4.5" y="10" width="6" height="3" fill="#b8c1c5"/>
    </svg>
    <div class="t" style="left:35px;top:31px;font-size:8.9px;font-weight:bold;color:#1a1c1e">My Computer</div>
    <div class="t" style="left:34px;top:44px;font-size:8px;color:#8c9aa1">system:/</div>
    <svg class="a" style="left:11px;top:61px" width="15" height="13" viewBox="0 0 20 18">
      <path d="M1.5 0 L8 0 L10 2 L18.5 2 Q20 2 20 3.5 L20 16.5 Q20 18 18.5 18 L1.5 18 Q0 18 0 16.5 L0 1.5 Q0 0 1.5 0 Z" fill="#8fa3ac"/>
      <path d="M1.5 0 L8 0 L10 2 L8.5 3.8 L0 3.8 L0 1.5 Q0 0 1.5 0 Z" fill="#7a8f99"/>
      <path d="M11 9 L15 9 L15 7.5 L17.5 10 L15 12.5 L15 11 L11 11 Z M13 12 L9 12 L9 10.5 L6.5 13 L9 15.5 L9 14 L13 14 Z" fill="#fff"/>
    </svg>
    <div class="t" style="left:35px;top:57px;font-size:8.8px;font-weight:bold;color:#1a1c1e">Network Folders</div>
    <div class="t" style="left:34px;top:70px;font-size:8.4px;color:#8c9aa1">remote:/</div>
    <div class="a" style="left:14px;top:84px;width:113px;height:1px;background:#98c2d4"></div>
    <svg class="a" style="left:11px;top:94px" width="15" height="14" viewBox="0 0 23 21">
      <path d="M7 4 L7 1.5 Q7 0.5 8 0.5 L14 0.5 Q15 0.5 15 1.5 L15 4" stroke="#9c7b61" stroke-width="2" fill="none"/>
      <rect x="0.5" y="3.8" width="20" height="13" rx="1" fill="#9c7b61"/>
      <circle cx="15.7" cy="14" r="6" fill="#3b8ee8"/>
      <path d="M15.7 10.5 L15.7 15.5 M14 17.3 L17.4 17.3" stroke="#fff" stroke-width="1.6"/>
    </svg>
    <div class="t" style="left:34px;top:90px;font-size:9px;color:#232627">Install Applications</div>
    <div class="t" style="left:34px;top:102.5px;font-size:8.2px;letter-spacing:-0.1px;color:#87949b">Q4OS Software Centre</div>
    <svg class="a" style="left:10px;top:118px" width="17" height="17" viewBox="0 0 18 18" opacity="0.55">
      <g fill="#f2d6c4"><circle cx="9" cy="9" r="6.5"/><rect x="7.5" y="0" width="3" height="4" transform="rotate(-20 9 9)"/><rect x="7.5" y="0" width="3" height="4" transform="rotate(-80 9 9)"/><rect x="7.5" y="0" width="3" height="4" transform="rotate(220 9 9)"/><rect x="7.5" y="0" width="3" height="4" transform="rotate(160 9 9)"/><rect x="7.5" y="0" width="3" height="4" transform="rotate(100 9 9)"/></g>
      <circle cx="10" cy="9" r="6" fill="#3a8ee8"/>
      <g stroke="#fff" stroke-width="0.9" fill="none"><circle cx="10" cy="9" r="3.8"/><path d="M7.3 6.3 L12.7 11.7 M7.3 11.7 L12.7 6.3"/></g>
    </svg>
    <div class="t" style="left:34px;top:117px;font-size:8.8px;color:#232627">Web Browser</div>
    <div class="t" style="left:34px;top:128.5px;font-size:8.6px;color:#8c9aa1">Konqueror</div>
    <svg class="a" style="left:10px;top:144px" width="17" height="17" viewBox="0 0 22 22">
      <g fill="#5b7381" transform="translate(11 11)">
        <circle r="7.3"/>
        <rect x="-2.6" y="-10.3" width="5.2" height="4" rx="0.8"/>
        <rect x="-2.6" y="-10.3" width="5.2" height="4" rx="0.8" transform="rotate(60)"/>
        <rect x="-2.6" y="-10.3" width="5.2" height="4" rx="0.8" transform="rotate(120)"/>
        <rect x="-2.6" y="-10.3" width="5.2" height="4" rx="0.8" transform="rotate(180)"/>
        <rect x="-2.6" y="-10.3" width="5.2" height="4" rx="0.8" transform="rotate(240)"/>
        <rect x="-2.6" y="-10.3" width="5.2" height="4" rx="0.8" transform="rotate(300)"/>
      </g>
      <circle cx="11" cy="11" r="3.6" fill="#fff"/>
    </svg>
    <div class="t" style="left:34px;top:148px;font-size:8.9px;color:#232627">Control panel</div>
    <svg class="a" style="left:10px;top:321px" width="15" height="15" style="display:none"></svg>
    <svg class="a" style="left:10px;top:168px" width="16" height="16" viewBox="0 0 16 16">
      <circle cx="8" cy="8" r="7.6" fill="#1e9aa5"/>
      <circle cx="8.8" cy="7" r="2.7" fill="none" stroke="#fff" stroke-width="1.4"/>
      <path d="M6.8 9 L4.6 11.2" stroke="#fff" stroke-width="1.6"/>
    </svg>
    <div class="t" style="left:34px;top:173.5px;font-size:8.5px;color:#232627">Find Files/Folders</div>
    <svg class="a" style="left:11px;top:188px" width="15" height="22" viewBox="0 0 15 22">
      <g fill="#111" transform="translate(4.5 5)">
        <circle r="2.6"/>
        <rect x="-1.1" y="-4.2" width="2.2" height="2" transform="rotate(0)"/><rect x="-1.1" y="-4.2" width="2.2" height="2" transform="rotate(60)"/><rect x="-1.1" y="-4.2" width="2.2" height="2" transform="rotate(120)"/><rect x="-1.1" y="-4.2" width="2.2" height="2" transform="rotate(180)"/><rect x="-1.1" y="-4.2" width="2.2" height="2" transform="rotate(240)"/><rect x="-1.1" y="-4.2" width="2.2" height="2" transform="rotate(300)"/>
      </g>
      <circle cx="4.5" cy="5" r="1.1" fill="#b3e5fc"/>
      <g fill="#111" transform="translate(9.5 15.5)">
        <circle r="3.8"/>
        <rect x="-1.4" y="-6" width="2.8" height="2.8" transform="rotate(0)"/><rect x="-1.4" y="-6" width="2.8" height="2.8" transform="rotate(60)"/><rect x="-1.4" y="-6" width="2.8" height="2.8" transform="rotate(120)"/><rect x="-1.4" y="-6" width="2.8" height="2.8" transform="rotate(180)"/><rect x="-1.4" y="-6" width="2.8" height="2.8" transform="rotate(240)"/><rect x="-1.4" y="-6" width="2.8" height="2.8" transform="rotate(300)"/>
      </g>
      <circle cx="9.5" cy="15.5" r="1.6" fill="#b3e5fc"/>
    </svg>
    <div class="t" style="left:34px;top:198.5px;font-size:8.5px;color:#232627">Run Command...</div>
    <div class="a" style="left:14px;top:219px;width:113px;height:1px;background:#98c2d4"></div>
    <svg class="a" style="left:10px;top:381px" width="1" height="1" style="display:none"></svg>
    <svg class="a" style="left:10px;top:229px" width="16" height="16" viewBox="0 0 16 16">
      <circle cx="8" cy="8" r="6.8" fill="#ece6e6" stroke="#3a3a3a" stroke-width="1.4"/>
      <path d="M8 8 L4.5 4.5 M8 8 L11 5" stroke="#777" stroke-width="1"/>
      <path d="M8 8 L8 13" stroke="#d33" stroke-width="0.8"/>
    </svg>
    <div class="t" style="left:34px;top:232.5px;font-size:8.5px;color:#232627">History</div>
    <svg class="a" style="left:10px;top:254px" width="16" height="16" viewBox="0 0 16 16">
      <path d="M8 0.5 L10.2 5.5 L15.5 6 L11.5 9.6 L12.7 15 L8 12.2 L3.3 15 L4.5 9.6 L0.5 6 L5.8 5.5 Z" fill="#f6c416"/>
    </svg>
    <div class="t" style="left:34px;top:257.5px;font-size:8.5px;color:#232627">&lt;&nbsp;&nbsp;Favorites</div>
  </div>
  <!-- bottom -->
  <div class="a" style="left:4px;top:333px;width:106px;height:18px;background:#fff;border:1px solid #3daee9;box-shadow:inset 0 0 0 1px #a8d8f0"></div>
  <svg class="a" style="left:99px;top:341px" width="6" height="4"><path d="M0 0 L5 0 L2.5 3 Z" fill="#111"/></svg>
  <div class="a" style="left:156px;top:331px;width:59px;height:22px;background:#fcfcfc"></div>
  <svg class="a" style="left:168px;top:337px" width="14" height="13" viewBox="0 0 14 13">
    <rect x="0.5" y="0" width="13" height="9" fill="#8b9da5"/>
    <rect x="3" y="9.5" width="8" height="2.5" fill="#c3cbcf"/>
    <rect x="6" y="2" width="2" height="5" fill="#333"/>
  </svg>
  <div class="t" style="left:185px;top:338.5px;font-size:8.7px;color:#232627">Lock</div>
  <div class="a" style="left:218px;top:331px;width:68px;height:22px;background:#fcfcfc"></div>
  <svg class="a" style="left:227px;top:335px" width="14" height="14" viewBox="0 0 14 14">
    <circle cx="7" cy="7" r="6.8" fill="#8b9da5"/>
    <circle cx="7" cy="7" r="4.6" fill="none" stroke="#fff" stroke-width="1.2"/>
    <rect x="4" y="6.2" width="6" height="1.7" fill="#fff"/>
  </svg>
  <div class="t" style="left:244px;top:338.5px;font-size:9.3px;color:#232627">Turn Off</div>
</div>

<!-- taskbar -->
<div class="a" style="left:0;top:510px;width:720px;height:30px;background:#323a43;box-shadow:0 -1px 3px rgba(0,0,0,0.3)">
  <svg class="a" style="left:12px;top:1px" width="5" height="3"><path d="M0 3 L2.5 0 L5 3 Z" fill="#000"/></svg>
  <svg class="a" style="left:4px;top:4px" width="22" height="22" viewBox="0 0 22 22">
    <circle cx="10.6" cy="11.1" r="10.4" fill="#4a8ef0"/>
    <circle cx="10.6" cy="11.1" r="6.2" fill="#fff"/>
    <path d="M10.6 4 L10.6 18.2 M3.5 11.1 L17.7 11.1" stroke="#4a8ef0" stroke-width="1.5"/>
    <circle cx="10.6" cy="11.1" r="1.8" fill="#4a8ef0"/>
  </svg>
  <div class="a" style="left:42px;top:7px;width:21px;height:19px;background:#03a9f4;border-top:2.5px solid #4d4d4d"></div>
  <svg class="a" style="left:69px;top:7px" width="19" height="19" viewBox="0 0 18 18">
    <g fill="#d9d9d9"><circle cx="9" cy="9" r="6.5"/><rect x="7.5" y="0" width="3" height="4" transform="rotate(-20 9 9)"/><rect x="7.5" y="0" width="3" height="4" transform="rotate(-80 9 9)"/><rect x="7.5" y="0" width="3" height="4" transform="rotate(220 9 9)"/><rect x="7.5" y="0" width="3" height="4" transform="rotate(160 9 9)"/><rect x="7.5" y="0" width="3" height="4" transform="rotate(100 9 9)"/></g>
    <circle cx="11" cy="8.5" r="6" fill="#3a8ee8"/>
    <g stroke="#fff" stroke-width="0.9" fill="none"><circle cx="11" cy="8.5" r="3.8"/><path d="M8.3 5.8 L13.7 11.2 M8.3 11.2 L13.7 5.8"/></g>
  </svg>
  <svg class="a" style="left:590px;top:13px" width="4" height="5"><path d="M4 0 L0 2.5 L4 5 Z" fill="#000"/></svg>
  <svg class="a" style="left:601px;top:8px" width="13" height="14" viewBox="0 0 13 14">
    <rect x="0.7" y="1.7" width="11.6" height="11.6" fill="#f5f1e8" stroke="#9a7a66" stroke-width="1.2"/>
    <rect x="3.5" y="0.3" width="6" height="2.8" fill="#f5f1e8" stroke="#9a7a66" stroke-width="0.8"/>
  </svg>
  <svg class="a" style="left:619px;top:9px" width="15" height="13" viewBox="0 0 15 13">
    <path d="M8 0 L14.5 3.5 L9 7.5 L9 5.5 L4.5 7.5 L3 4.5 L8 2.5 Z" fill="#d9dee1"/>
    <path d="M6.5 13 L0.5 9.5 L6 5.5 L6 7.5 L10.5 5.5 L12 8.5 L7 10.5 Z" fill="#d9dee1"/>
  </svg>
  <svg class="a" style="left:638px;top:8px" width="16" height="14" viewBox="0 0 16 14">
    <path d="M0 4.5 L3.5 4.5 L8 0.5 L8 13.5 L3.5 9.5 L0 9.5 Z" fill="#8fa0a8"/>
    <path d="M10 1.5 Q15 7 10 12.5" stroke="#8fa0a8" stroke-width="2" fill="none"/>
  </svg>
  <div class="t" style="left:669px;top:9.5px;font-size:11.6px;letter-spacing:-0.3px;font-weight:bold;color:#e3e7ea">09:18 am</div>
</div>

</body></html>
